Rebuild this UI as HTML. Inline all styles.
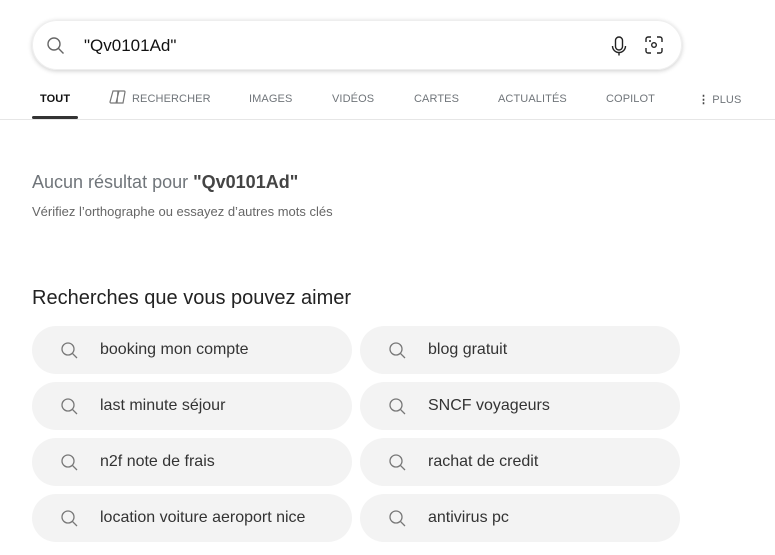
<!DOCTYPE html>
<html><head><meta charset="utf-8"><style>
*{margin:0;padding:0;box-sizing:border-box}
body{width:775px;height:555px;background:#fff;font-family:"Liberation Sans",Arial,sans-serif;position:relative;overflow:hidden}
.sb{position:absolute;left:32px;top:20px;width:650px;height:50px;border-radius:25px;box-shadow:0 1px 5px rgba(0,0,0,.2);border:1px solid #eee}
.sb .q{position:absolute;left:51px;top:15px;font-size:17px;color:#111}
.tabs{position:absolute;left:0;top:0;width:775px;height:120px;border-bottom:1px solid #e6e6e6}
.tab{position:absolute;top:93px;font-size:11px;color:#70757a;letter-spacing:.1px}
.ul{position:absolute;left:32px;top:116px;width:46px;height:3px;background:#333;border-radius:2px}
.pill{position:absolute;width:320px;height:48px;border-radius:24px;background:#f3f3f3}
.pill span{position:absolute;left:68px;top:15px;font-size:16px;color:#333}
.pill svg{position:absolute;left:28px;top:15px}
</style></head><body>
<div class="tabs">
<div class="sb">
<svg style="position:absolute;left:13px;top:15px" width="20" height="20" viewBox="0 0 20 20"><circle cx="8" cy="8" r="6" fill="none" stroke="#666" stroke-width="1.4"/><line x1="12.3" y1="12.3" x2="17.5" y2="17.5" stroke="#666" stroke-width="1.4"/></svg>
<div class="q">"Qv0101Ad"</div>
<svg style="position:absolute;left:576px;top:14px" width="20" height="22" viewBox="0 0 20 22"><rect x="6.5" y="2" width="7" height="13" rx="3.5" fill="none" stroke="#222" stroke-width="1.4"/><path d="M3.5 11a6.5 6.5 0 0 0 13 0" fill="none" stroke="#222" stroke-width="1.4"/><line x1="10" y1="17.5" x2="10" y2="20.5" stroke="#222" stroke-width="1.4"/></svg>
<svg style="position:absolute;left:611px;top:14px" width="20" height="20" viewBox="0 0 20 20"><path d="M2 7V4a2 2 0 0 1 2-2h3M13 2h3a2 2 0 0 1 2 2v3M18 13v3a2 2 0 0 1-2 2h-3M7 18H4a2 2 0 0 1-2-2v-3" fill="none" stroke="#222" stroke-width="1.4"/><circle cx="10" cy="10" r="2.3" fill="none" stroke="#222" stroke-width="1.4"/><circle cx="6" cy="6" r="1" fill="#222"/></svg>
</div>
<div class="tab" style="left:40px;color:#111;font-weight:bold">TOUT</div>
<svg style="position:absolute;left:109px;top:89px" width="18" height="16" viewBox="0 0 18 16"><path d="M4 2h6l-3 12H2a1 1 0 0 1-1-1zM9 2h6a1 1 0 0 1 1 1l-2 11H8z" fill="none" stroke="#777" stroke-width="1.2"/></svg>
<div class="tab" style="left:132px">RECHERCHER</div>
<div class="tab" style="left:249px">IMAGES</div>
<div class="tab" style="left:332px">VIDÉOS</div>
<div class="tab" style="left:414px">CARTES</div>
<div class="tab" style="left:498px">ACTUALITÉS</div>
<div class="tab" style="left:606px">COPILOT</div>
<div class="tab" style="left:698px"><b style="color:#444">⋮</b> PLUS</div>
<div class="ul"></div>
</div>
<div style="position:absolute;left:32px;top:172px;font-size:18px;color:#70757a">Aucun résultat pour <b style="color:#444">"Qv0101Ad"</b></div>
<div style="position:absolute;left:32px;top:204px;font-size:13px;color:#666">Vérifiez l’orthographe ou essayez d’autres mots clés</div>
<div style="position:absolute;left:32px;top:287px;font-size:20px;color:#222">Recherches que vous pouvez aimer</div>
<div class="pill" style="left:32px;top:326px"><svg width="20" height="20" viewBox="0 0 20 20"><circle cx="8" cy="8" r="6" fill="none" stroke="#777" stroke-width="1.3"/><line x1="12.3" y1="12.3" x2="17" y2="17" stroke="#777" stroke-width="1.3"/></svg><span>booking mon compte</span></div>
<div class="pill" style="left:360px;top:326px"><svg width="20" height="20" viewBox="0 0 20 20"><circle cx="8" cy="8" r="6" fill="none" stroke="#777" stroke-width="1.3"/><line x1="12.3" y1="12.3" x2="17" y2="17" stroke="#777" stroke-width="1.3"/></svg><span>blog gratuit</span></div>
<div class="pill" style="left:32px;top:382px"><svg width="20" height="20" viewBox="0 0 20 20"><circle cx="8" cy="8" r="6" fill="none" stroke="#777" stroke-width="1.3"/><line x1="12.3" y1="12.3" x2="17" y2="17" stroke="#777" stroke-width="1.3"/></svg><span>last minute séjour</span></div>
<div class="pill" style="left:360px;top:382px"><svg width="20" height="20" viewBox="0 0 20 20"><circle cx="8" cy="8" r="6" fill="none" stroke="#777" stroke-width="1.3"/><line x1="12.3" y1="12.3" x2="17" y2="17" stroke="#777" stroke-width="1.3"/></svg><span>SNCF voyageurs</span></div>
<div class="pill" style="left:32px;top:438px"><svg width="20" height="20" viewBox="0 0 20 20"><circle cx="8" cy="8" r="6" fill="none" stroke="#777" stroke-width="1.3"/><line x1="12.3" y1="12.3" x2="17" y2="17" stroke="#777" stroke-width="1.3"/></svg><span>n2f note de frais</span></div>
<div class="pill" style="left:360px;top:438px"><svg width="20" height="20" viewBox="0 0 20 20"><circle cx="8" cy="8" r="6" fill="none" stroke="#777" stroke-width="1.3"/><line x1="12.3" y1="12.3" x2="17" y2="17" stroke="#777" stroke-width="1.3"/></svg><span>rachat de credit</span></div>
<div class="pill" style="left:32px;top:494px"><svg width="20" height="20" viewBox="0 0 20 20"><circle cx="8" cy="8" r="6" fill="none" stroke="#777" stroke-width="1.3"/><line x1="12.3" y1="12.3" x2="17" y2="17" stroke="#777" stroke-width="1.3"/></svg><span>location voiture aeroport nice</span></div>
<div class="pill" style="left:360px;top:494px"><svg width="20" height="20" viewBox="0 0 20 20"><circle cx="8" cy="8" r="6" fill="none" stroke="#777" stroke-width="1.3"/><line x1="12.3" y1="12.3" x2="17" y2="17" stroke="#777" stroke-width="1.3"/></svg><span>antivirus pc</span></div>
</body></html>
